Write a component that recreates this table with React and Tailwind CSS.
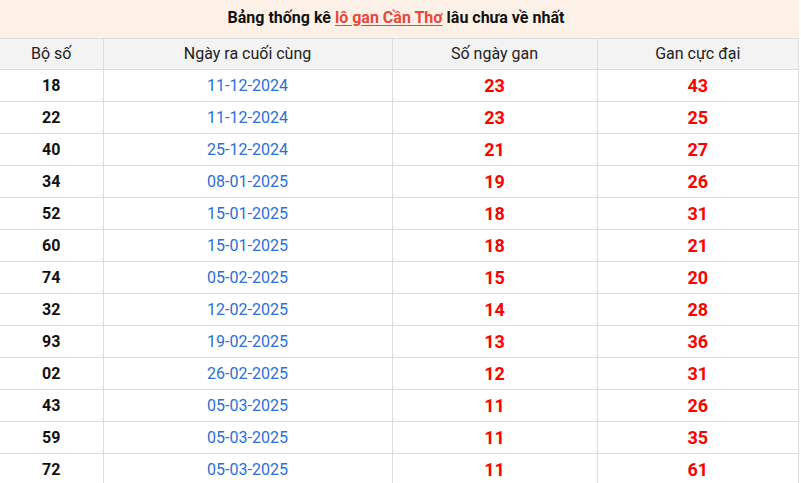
const rows = [
  ["18", "11-12-2024", "23", "43"],
  ["22", "11-12-2024", "23", "25"],
  ["40", "25-12-2024", "21", "27"],
  ["34", "08-01-2025", "19", "26"],
  ["52", "15-01-2025", "18", "31"],
  ["60", "15-01-2025", "18", "21"],
  ["74", "05-02-2025", "15", "20"],
  ["32", "12-02-2025", "14", "28"],
  ["93", "19-02-2025", "13", "36"],
  ["02", "26-02-2025", "12", "31"],
  ["43", "05-03-2025", "11", "26"],
  ["59", "05-03-2025", "11", "35"],
  ["72", "05-03-2025", "11", "61"],
];

export default function App() {
  return (
    <div className="w-[799px] bg-white font-['Roboto',sans-serif] text-[#222]">
      {/* TITLE */}
      <div className="h-[38px] pb-[2px] pr-[7px] bg-[#fdf1e7] flex items-center justify-center text-[16px] font-bold text-[#111]">
        <span>
          Bảng thống kê{" "}
          <a href="#" className="text-[#e8473c] underline underline-offset-2">
            lô gan Cần Thơ
          </a>{" "}
          lâu chưa về nhất
        </span>
      </div>

      {/* TABLE */}
      <table className="w-full border-collapse text-center">
        <thead>
          <tr className="h-[31px] bg-[#f3f3f3] text-[16px]">
            <th className="w-[103px] border border-[#dddddd] border-l-0 font-normal">Bộ số</th>
            <th className="w-[289px] border border-[#dddddd] font-normal">Ngày ra cuối cùng</th>
            <th className="w-[205px] border border-[#dddddd] font-normal">Số ngày gan</th>
            <th className="border border-[#dddddd] font-normal">Gan cực đại</th>
          </tr>
        </thead>
        <tbody>
          {rows.map((r, i) => (
            <tr key={i} className="h-[32px]">
              <td className="border border-[#dddddd] border-l-0 text-[16px] font-bold text-[#111]">{r[0]}</td>
              <td className="border border-[#dddddd] text-[16px] text-[#2a6fd8]">{r[1]}</td>
              <td className="border border-[#dddddd] text-[18px] font-bold text-[#ff0000]">{r[2]}</td>
              <td className="border border-[#dddddd] text-[18px] font-bold text-[#ff0000]">{r[3]}</td>
            </tr>
          ))}
        </tbody>
      </table>
    </div>
  );
}
